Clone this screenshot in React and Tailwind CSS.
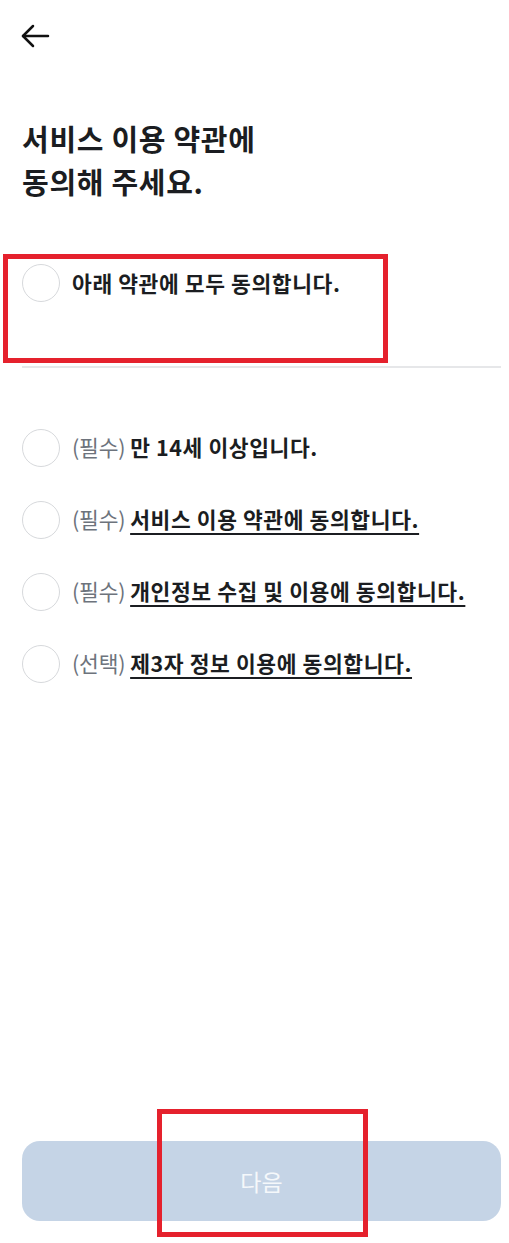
const items = [
  { tag: "(필수)", text: "만 14세 이상입니다.", link: false },
  { tag: "(필수)", text: "서비스 이용 약관에 동의합니다.", link: true },
  { tag: "(필수)", text: "개인정보 수집 및 이용에 동의합니다.", link: true },
  { tag: "(선택)", text: "제3자 정보 이용에 동의합니다.", link: true },
];

function Circle() {
  return (
    <span className="block w-[38px] h-[38px] shrink-0 rounded-full border-[1.5px] border-[#d7d9dc] bg-white" />
  );
}

export default function App() {
  return (
    <div
      className="relative flex flex-col h-[1243px] w-full bg-white text-[#1b1d21]"
      style={{ fontFamily: '"Noto Sans CJK KR", "Noto Sans", sans-serif' }}
    >
      {/* header */}
      <div className="h-[72px] flex items-center pl-[20px]">
        <svg width="30" height="24" viewBox="0 0 30 24" fill="none" stroke="#111" strokeWidth="2.5" strokeLinecap="round" strokeLinejoin="round">
          <path d="M3 12H28" />
          <path d="M13 2L3 12L13 22" />
        </svg>
      </div>

      <h1 className="mt-[45px] px-[22px] text-[29px] font-bold leading-[43px] tracking-[0.7px] text-[#1b1d21]">
        서비스 이용 약관에
        <br />
        동의해 주세요.
      </h1>

      {/* agree all */}
      <div className="mt-[61px] pl-[22px] pr-[8px] flex items-center gap-[12px]">
        <Circle />
        <span className="text-[21.5px] font-bold tracking-[0.6px]">아래 약관에 모두 동의합니다.</span>
      </div>

      <div className="ml-[22px] mr-[8px] mt-[64px] h-[1.5px] bg-[#e6e7e9]" />

      <div className="mt-[44px] pl-[22px] pr-[8px] flex flex-col">
        {items.map((it, i) => (
          <div key={i} className="h-[72px] flex items-center gap-[12px]">
            <Circle />
            <span className="text-[21.5px] whitespace-nowrap">
              <span className="text-[#6d737c] tracking-[-0.2px]">{it.tag}</span>{" "}
              <span
                className={
                  it.link
                    ? "font-bold tracking-[0.6px] underline decoration-[2px] underline-offset-[5px]"
                    : "font-bold tracking-[0.6px]"
                }
              >
                {it.text}
              </span>
            </span>
          </div>
        ))}
      </div>

      <div className="mt-auto pl-[22px] pr-[8px] pb-[22px]">
        <button className="w-full h-[80px] rounded-[18px] bg-[#c5d4e6] text-[23px] text-[#f5f8fb]">
          다음
        </button>
      </div>

      {/* annotation boxes */}
      <div className="absolute left-[3px] top-[254px] w-[385px] h-[109px] border-[5px] border-[#e5212d] pointer-events-none" />
      <div className="absolute left-[157px] top-[1109px] w-[211px] h-[128px] border-[5px] border-[#e5212d] pointer-events-none" />
    </div>
  );
}
